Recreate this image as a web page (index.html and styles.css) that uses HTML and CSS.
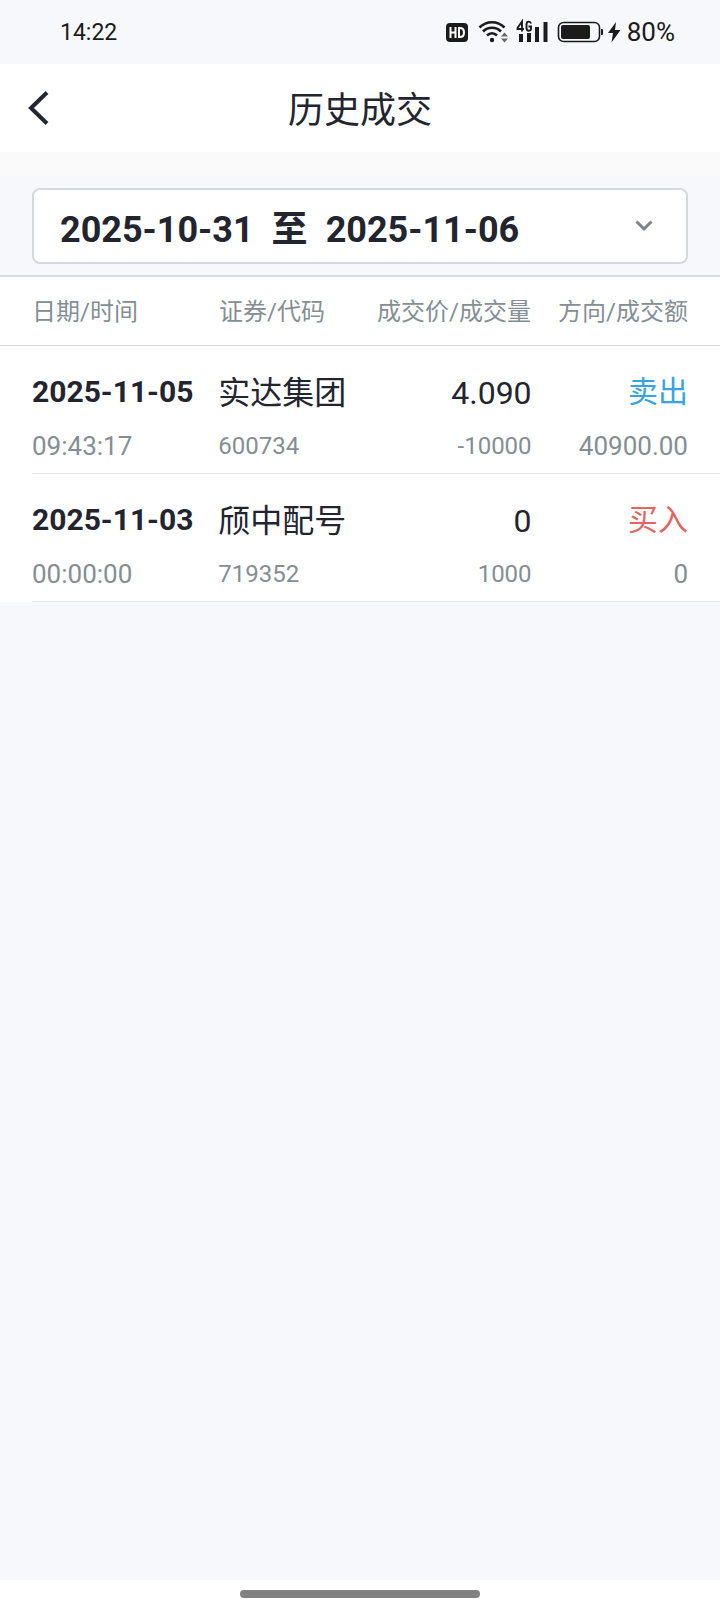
FILE: index.html
```html
<!DOCTYPE html>
<html lang="zh-CN">
<head>
<meta charset="utf-8">
<meta name="viewport" content="width=device-width, initial-scale=1">
<title>历史成交</title>
<link rel="stylesheet" href="styles.css">
</head>
<body>
<div class="app">
  <div class="status-bar">
    <span class="status-time">14:22</span>
    <div class="status-icons">
      <svg class="icon-signals" width="158" height="28" viewBox="0 0 158 28" role="img" aria-label="HD、Wi-Fi、4G、电量">
        <rect x="0" y="5" width="22" height="19" rx="4" fill="#1b1b1b"/>
        <path d="M4.500 9v11M9.500 9v11M4.500 14.500h5M13 10v9h1q4 0 4-4.500t-4-4.500z" fill="none" stroke="#fff" stroke-width="2"/>
        <g fill="none" stroke="#1b1b1b" stroke-width="2.600">
          <path d="M33.500 9.500c7-7 18-7 25 0"/>
          <path d="M37 13.500c5-5 13-5 18 0"/>
          <path d="M41 17.500c3-3 7-3 10 0"/>
        </g>
        <circle cx="46" cy="22" r="2.200" fill="#1b1b1b"/>
        <path d="M55 18.500l3.500-4 3.500 4zM55 20.500l3.500 4 3.500-4z" fill="#666"/>
        <path d="M76 13.500V3.500L71.500 10v1H78M85 5.500c-.7-2.600-4.500-2.600-4.500 1v3.500c0 3.800 4.500 3.300 4.500 1V8.500h-2.500" fill="none" stroke="#1b1b1b" stroke-width="1.900"/>
        <path d="M73 16h4v8h-4zM81 15h4v9h-4zM89 9h4v15h-4zM97.500 4h4v20h-4z" fill="#1b1b1b"/>
        <rect x="112.500" y="4.500" width="41" height="19" rx="5" fill="none" stroke="#1b1b1b" stroke-width="1.600"/>
        <rect x="115" y="7" width="29" height="14" rx="2" fill="#1b1b1b"/>
        <path d="M155 11h1q1 0 1 1v4q0 1-1 1h-1z" fill="#1b1b1b"/>
      </svg>
      <svg class="icon-bolt" width="14" height="22" viewBox="0 0 14 22" aria-hidden="true">
        <path d="M9 1L1 12h5L4.500 21.500 13.500 9H8z" fill="#1b1b1b"/>
      </svg>
      <span class="status-battery">80%</span>
    </div>
  </div>

  <header class="nav-bar">
    <button class="back-button" type="button" aria-label="返回">
      <svg width="22" height="36" viewBox="0 0 22 36" aria-hidden="true">
        <path d="M19 2.500L3 18l16 15.500" fill="none" stroke="#222733" stroke-width="4"/>
      </svg>
    </button>
    <h1 class="nav-title">历史成交</h1>
  </header>

  <main class="content">
    <div class="filter">
      <button class="date-range" type="button" aria-haspopup="dialog">
        <span class="date-text"><span>2025-10-31</span><span>至</span><span>2025-11-06</span></span>
        <svg width="18" height="12" viewBox="0 0 18 12" aria-hidden="true">
          <path d="M1.500 1.500L9 9l7.500-7.500" fill="none" stroke="#7b838c" stroke-width="3"/>
        </svg>
      </button>
    </div>

    <table class="trades">
      <thead>
        <tr class="head-row">
          <th scope="col">日期/时间</th>
          <th scope="col">证券/代码</th>
          <th scope="col" class="num">成交价/成交量</th>
          <th scope="col" class="num">方向/成交额</th>
        </tr>
      </thead>
      <tbody>
        <tr class="trade-row">
          <td><span class="main date">2025-11-05</span><span class="sub">09:43:17</span></td>
          <td><span class="main">实达集团</span><span class="sub small">600734</span></td>
          <td class="num"><span class="main">4.090</span><span class="sub small">-10000</span></td>
          <td class="num"><span class="main side sell">卖出</span><span class="sub">40900.00</span></td>
        </tr>
        <tr class="trade-row">
          <td><span class="main date">2025-11-03</span><span class="sub">00:00:00</span></td>
          <td><span class="main">颀中配号</span><span class="sub small">719352</span></td>
          <td class="num"><span class="main">0</span><span class="sub small">1000</span></td>
          <td class="num"><span class="main side buy">买入</span><span class="sub">0</span></td>
        </tr>
      </tbody>
    </table>
  </main>

  <div class="gesture-bar"><span class="gesture-pill"></span></div>
</div>
</body>
</html>
```

FILE: styles.css
```css
* {
  box-sizing: border-box;
}

body {
  margin: 0;
  background: #f7f8fb;
  color: #222430;
  font-family: Roboto, "Noto Sans CJK SC", sans-serif;
}

button {
  border: 0;
  padding: 0;
  background: none;
  color: inherit;
  font: inherit;
}

svg {
  display: block;
}

.app {
  display: flex;
  flex-direction: column;
  min-height: 100vh;
}

.status-bar {
  display: flex;
  align-items: center;
  justify-content: space-between;
  height: 64px;
  padding: 0 45px 0 60px;
  color: #1b1b1b;
}

.status-time {
  font-size: 23px;
}

.status-icons {
  display: flex;
  align-items: center;
}

.icon-bolt {
  margin: 0 6px 0 3px;
}

.status-battery {
  font-size: 26px;
}

.nav-bar {
  display: grid;
  grid-template-columns: 72px 1fr 72px;
  align-items: center;
  height: 88px;
  background: #fff;
}

.back-button {
  padding-left: 28px;
}

.nav-title {
  margin: 0;
  padding-top: 6px;
  font-size: 36px;
  font-weight: 400;
  line-height: 48px;
  text-align: center;
}

.content {
  flex: 1;
  border-top: 24px solid #fafafa;
}

.filter {
  padding: 12px 32px 11px;
}

.date-range {
  display: flex;
  align-items: center;
  justify-content: space-between;
  width: 100%;
  height: 76px;
  padding: 0 33px 0 26px;
  border: 2px solid #d3d8df;
  border-radius: 8px;
  background: #fff;
  font-size: 36px;
  font-weight: 700;
}

.date-text {
  display: flex;
  align-items: baseline;
  gap: 18px;
}

.trades {
  display: block;
  border-top: 2px solid #d9dce0;
  background: #fff;
}

.trades thead,
.trades tbody {
  display: block;
}

.head-row,
.trade-row {
  display: grid;
  grid-template-columns: 187fr 126fr 186fr 157fr;
}

.head-row {
  padding: 17px 32px 15px;
  border-bottom: 1px solid #d3d7da;
}

.trade-row {
  margin-left: 32px;
  padding: 24px 32px 8px 0;
  border-bottom: 1px solid #e3e5e7;
}

.trades th,
.trades td {
  padding: 0;
  text-align: left;
  white-space: nowrap;
}

.trades th {
  color: #848e94;
  font-size: 24px;
  font-weight: 400;
  line-height: 36px;
}

.trades .num {
  text-align: right;
}

.main,
.sub {
  display: block;
}

.main {
  margin-bottom: 11px;
  font-size: 32px;
  line-height: 46px;
}

.date {
  margin-bottom: 13px;
  font-size: 30px;
  font-weight: 700;
  line-height: 44px;
}

.side {
  margin-bottom: 13px;
  font-size: 30px;
  line-height: 44px;
}

.sell {
  color: #36a3e3;
}

.buy {
  color: #e56461;
}

.sub {
  color: #848e94;
  font-size: 26px;
  line-height: 38px;
}

.small {
  font-size: 24px;
}

.gesture-bar {
  display: flex;
  justify-content: center;
  height: 32px;
  padding-top: 10px;
  background: #fff;
}

.gesture-pill {
  width: 240px;
  height: 8px;
  border-radius: 4px;
  background: #808080;
}
```
